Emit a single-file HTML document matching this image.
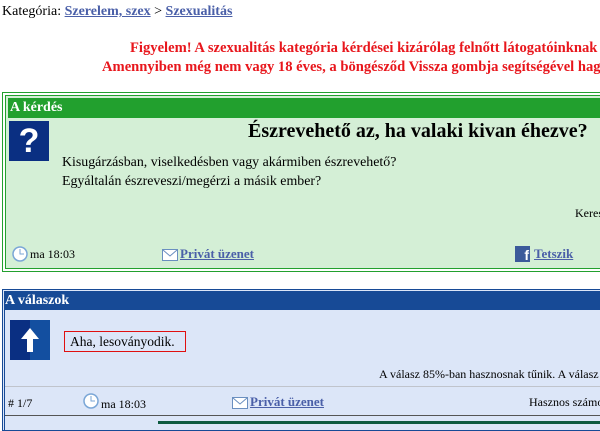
<!DOCTYPE html>
<html><head><meta charset="utf-8"><style>
body{margin:0;width:600px;height:424px;overflow:hidden;background:#fff;font-family:"Liberation Serif",serif;font-size:13px;color:#000;position:relative}
.a{position:absolute;white-space:nowrap}
a,.l{color:#4a5fa8;font-weight:bold;text-decoration:underline}
.red{color:#e8161c;font-weight:bold;font-size:14.6px}
</style></head><body>
<div class="a" style="left:2px;top:4px;font-size:14px">Kategória: <span class="l">Szerelem, szex</span> &gt; <span class="l">Szexualitás</span></div>
<div class="a red" style="left:130px;top:40px">Figyelem! A szexualitás kategória kérdései kizárólag felnőtt látogatóinknak</div>
<div class="a red" style="left:102px;top:59px">Amennyiben még nem vagy 18 éves, a böngésződ Vissza gombja segítségével hagy</div>

<div class="a" style="left:2px;top:92px;width:610px;height:178px;border:1px solid #22a02e;border-right:none"></div>
<div class="a" style="left:5px;top:95px;width:610px;height:172px;border:1px solid #22a02e;border-right:none;background:#d4efd6"></div>
<div class="a" style="left:8px;top:98px;width:600px;height:20px;background:#22a02e;color:#fff;font-weight:bold;font-size:14px;line-height:20px;padding-left:2px">A kérdés</div>
<div class="a" style="left:9px;top:121px;width:40px;height:40px;background:#0a2f82;color:#fff;font:bold 34px 'Liberation Sans',sans-serif;text-align:center;line-height:40px">?</div>
<div class="a" style="left:248px;top:120px;font-weight:bold;font-size:20px">Észrevehető az, ha valaki kivan éhezve?</div>
<div class="a" style="left:62px;top:153px;line-height:19px;font-size:13.9px">Kisugárzásban, viselkedésben vagy akármiben észrevehető?<br>Egyáltalán észreveszi/megérzi a másik ember?</div>
<div class="a" style="left:575px;top:206px;font-size:12px">Keres</div>
<svg class="a" style="left:12px;top:246px" width="16" height="16"><circle cx="8" cy="8" r="7" fill="#fff" stroke="#7aa6d6" stroke-width="1.5"/><path d="M8 3v5h4" stroke="#7aa6d6" fill="none"/></svg>
<div class="a" style="left:30px;top:247px;font-size:12px">ma 18:03</div>
<svg class="a" style="left:162px;top:249px" width="16" height="12"><rect x="0.5" y="0.5" width="15" height="11" fill="#fff" stroke="#6a8fc0"/><path d="M1 1l7 6 7-6" stroke="#6a8fc0" fill="none"/></svg>
<div class="a l" style="left:180px;top:246px;font-size:13px">Privát üzenet</div>
<div class="a" style="left:515px;top:246px;width:15px;height:16px;background:#3b5a9a;color:#fff;font:bold 14px 'Liberation Sans',sans-serif;text-align:right;line-height:18px;padding-right:1px;box-sizing:border-box">f</div>
<div class="a l" style="left:534px;top:246px;font-size:13px">Tetszik</div>

<div class="a" style="left:2px;top:289px;width:610px;height:140px;border:1px solid #174a96;border-right:none;background:#dce6f8"></div>
<div class="a" style="left:4px;top:291px;width:600px;height:19px;background:#174a96;color:#fff;font-weight:bold;font-size:14px;line-height:20px;padding-left:1px">A válaszok</div>
<div class="a" style="left:4px;top:310px;width:1px;height:120px;background:#174a96"></div>
<div class="a" style="left:10px;top:320px;width:40px;height:40px;background:linear-gradient(90deg,#0a2f82 50%,#134fa0 50%)"></div>
<svg class="a" style="left:10px;top:320px" width="40" height="40"><path d="M20 8l-9 11h6v13h6V19h6z" fill="#fff"/></svg>
<div class="a" style="left:64px;top:331px;border:1px solid #e01010;font-size:13.5px;line-height:19px;padding-left:5px;box-sizing:border-box;width:122px;height:21px">Aha, lesoványodik.</div>
<div class="a" style="left:379px;top:367px;font-size:12px">A válasz 85%-ban hasznosnak tűnik. A válasz</div>
<div class="a" style="left:5px;top:386px;width:600px;height:1px;background:#c0c4cc"></div>
<div class="a" style="left:8px;top:396px;font-size:12px"># 1/7</div>
<svg class="a" style="left:83px;top:393px" width="16" height="16"><circle cx="8" cy="8" r="7" fill="#fff" stroke="#7aa6d6" stroke-width="1.5"/><path d="M8 3v5h4" stroke="#7aa6d6" fill="none"/></svg>
<div class="a" style="left:101px;top:397px;font-size:12px">ma 18:03</div>
<svg class="a" style="left:232px;top:397px" width="16" height="12"><rect x="0.5" y="0.5" width="15" height="11" fill="#fff" stroke="#6a8fc0"/><path d="M1 1l7 6 7-6" stroke="#6a8fc0" fill="none"/></svg>
<div class="a l" style="left:250px;top:394px;font-size:13px">Privát üzenet</div>
<div class="a" style="left:529px;top:395px;font-size:12px">Hasznos számo</div>
<div class="a" style="left:5px;top:415px;width:600px;height:1px;background:#555"></div>
<div class="a" style="left:158px;top:421px;width:450px;height:3px;background:#0d5a40"></div>
</body></html>
